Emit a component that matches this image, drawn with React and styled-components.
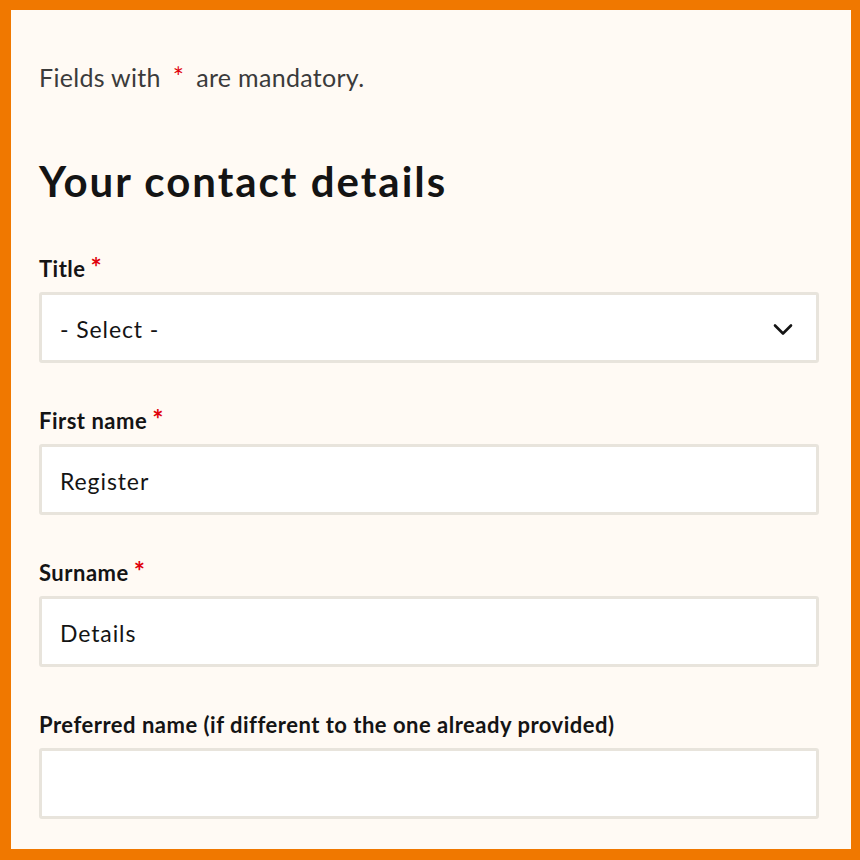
import styled, { createGlobalStyle } from 'styled-components';

const Global = createGlobalStyle`
  html, body { margin: 0; padding: 0; }
  body {
    background: #f07800;
    font-family: Lato, "Noto Sans", sans-serif;
  }
`;

const Frame = styled.div`
  box-sizing: border-box;
  width: 860px;
  height: 860px;
  border-style: solid;
  border-color: #f07800;
  border-width: 10px 9px 11px 11px;
  background: #fffaf4;
  padding: 52px 32px 0 28px;
  overflow: hidden;
`;

const Note = styled.p`
  margin: 0;
  font-size: 25px;
  letter-spacing: 0.3px;
  color: #3b3b3b;
  line-height: 30px;
`;

const Star = styled.span`
  color: #e0000b;
  font-size: ${p => (p.spaced ? '1.05em' : '1.2em')};
  line-height: 0;
  margin: ${p => (p.spaced ? '0 12px' : '0 0 0 5px')};
`;

const Heading = styled.h2`
  margin: 64px 0 0;
  font-size: 42px;
  font-weight: 700;
  color: #141414;
  line-height: 50px;
  letter-spacing: 2px;
`;

const Form = styled.div`
  margin-top: 50px;
  display: flex;
  flex-direction: column;
  gap: 45px;
`;

const Field = styled.div`
  display: flex;
  flex-direction: column;
  gap: 10px;
`;

const Label = styled.label`
  font-size: 22px;
  font-weight: 700;
  letter-spacing: 0.5px;
  color: #141414;
  line-height: 26px;
`;

const Box = styled.div`
  box-sizing: border-box;
  height: 71px;
  width: 780px;
  background: #fff;
  border: 3px solid #e8e4dc;
  border-radius: 3px;
  display: flex;
  align-items: center;
  justify-content: space-between;
  padding: 3px 23px 0 18px;
  font-size: 23px;
  letter-spacing: 0.9px;
  color: #141414;
`;

const Chevron = () => (
  <svg width="20" height="13" viewBox="0 0 20 13">
    <path d="M2 2.5 L10 10.5 L18 2.5" fill="none" stroke="#141414" strokeWidth="2.6" strokeLinecap="round" strokeLinejoin="round" />
  </svg>
);

const fields = [
  { label: 'Title', required: true, value: '- Select -', select: true },
  { label: 'First name', required: true, value: 'Register' },
  { label: 'Surname', required: true, value: 'Details' },
  { label: 'Preferred name (if different to the one already provided)', value: '' },
];

export default function App() {
  return (
    <Frame>
      <Global />
      <Note>
        Fields with<Star spaced>*</Star>are mandatory.
      </Note>
      <Heading>Your contact details</Heading>
      <Form>
        {fields.map(f => (
          <Field key={f.label}>
            <Label>
              {f.label}
              {f.required && <Star>*</Star>}
            </Label>
            <Box>
              <span>{f.value}</span>
              {f.select && <Chevron />}
            </Box>
          </Field>
        ))}
      </Form>
    </Frame>
  );
}
